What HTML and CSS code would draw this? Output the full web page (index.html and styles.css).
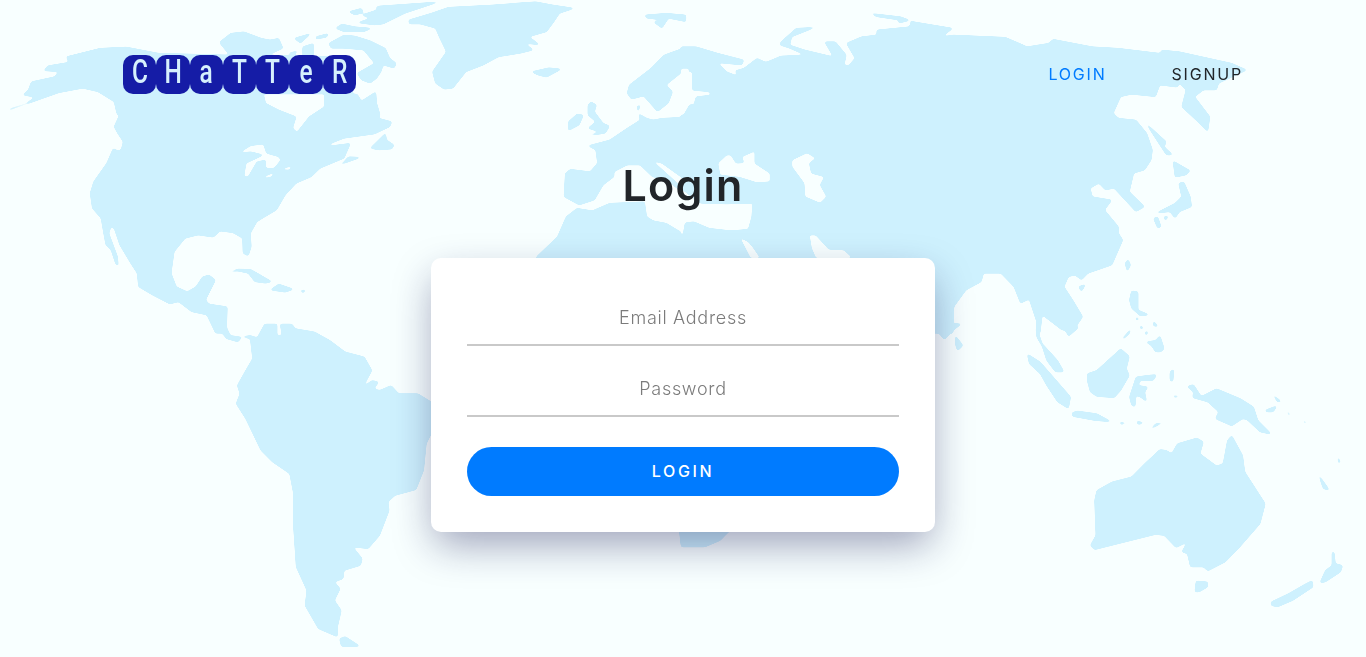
FILE: index.html
```html
<!DOCTYPE html>
<html lang="en">
<head>
<meta charset="utf-8">
<title>Chatter - Login</title>
<link rel="stylesheet" href="styles.css">
</head>
<body>
<svg class="world" viewBox="0 0 1366 657" width="1366" height="657" aria-hidden="true">
  <defs>
    <filter id="smooth" x="0" y="0" width="100%" height="100%" color-interpolation-filters="sRGB">
      <feGaussianBlur stdDeviation="1.2"/>
      <feColorMatrix type="matrix" values="0 0 0 0 .808  0 0 0 0 .945  0 0 0 0 .996  0 0 0 7 -2.1"/>
    </filter>
    <mask id="seas" maskUnits="userSpaceOnUse" x="0" y="0" width="1366" height="657">
      <rect width="1366" height="657" fill="#fff"/>
      <g fill="#000" transform="scale(.4355 .3333)">
        <polygon points="605,282 745,282 745,320 710,350 682,397 672,385 680,350 640,330 610,310"/>
        <polygon points="548,460 575,437 605,432 612,460 640,470 645,480 630,505 610,505 610,480 590,485 570,530 560,530 565,490 605,465 575,455"/>
        <polygon points="650,505 672,497 665,510 650,510"/>
        <polygon points="605,530 630,517 625,530 610,535"/>
        <polygon points="250,410 262,408 272,425 265,433"/>
        <polygon points="1568,215 1530,255 1545,275 1535,310 1510,335 1500,345 1570,345 1590,300 1590,215"/>
        <polygon points="1498,482 1520,490 1568,535 1568,565 1530,520"/>
      </g>
      <g fill="#000" transform="translate(683 0) scale(.4355 .3333)">
        <polygon points="-5,205 15,205 5,250 15,270 60,275 65,285 30,290 25,315 10,312 0,345 -5,345"/>
        <polygon points="0,570 20,590 40,610 100,612 160,610 158,650 150,688 110,692 60,685 25,665 5,668 0,705 -5,705 -5,570"/>
        <polygon points="110,465 122,490 140,488 135,470 165,453 165,490 200,520 200,545 170,548 130,532 85,525 80,490 100,465"/>
        <polygon points="250,480 285,458 305,475 290,490 295,520 325,530 315,555 330,590 315,610 280,590 278,550 250,500"/>
        <polygon points="130,712 150,725 160,740 178,775 155,775"/>
        <polygon points="290,705 305,705 335,748 370,750 390,775 305,775 295,745"/>
      </g>
    </mask>
  </defs>
  <g filter="url(#smooth)">
    <g mask="url(#seas)">
      <g transform="scale(.4355 .3333)">
        <polygon points="15,334 25,325 60,310 80,292 52,285 65,270 72,245 125,230 135,215 100,212 110,197 158,187 152,170 230,145 290,141 365,160 530,165 600,165 810,170 810,282 820,282 830,303 863,275 865,310 873,345 870,355 900,365 895,380 860,402 790,415 755,433 760,437 805,430 795,460 790,475 735,505 715,530 680,550 655,585 635,630 590,665 575,700 577,740 570,768 558,760 557,715 535,698 505,693 490,712 455,705 425,715 400,755 393,820 405,860 430,875 450,860 465,830 480,825 495,840 472,900 480,912 522,920 520,1000 495,1000 475,945 440,935 410,905 390,912 350,885 318,860 315,820 300,790 275,735 262,685 255,680 250,700 270,770 272,800 265,790 255,750 243,735 238,700 232,655 212,625 207,580 215,545 245,490 260,445 270,452 278,450 283,425 270,400 262,380 273,348 268,340 262,305 225,275 190,265 135,278"/>
        <polygon points="505,125 530,100 560,95 600,115 620,120 640,115 650,145 625,160 590,170 530,170 505,130"/>
        <polygon points="755,130 790,105 815,108 850,122 885,145 895,175 910,190 905,205 880,195 875,215 865,235 850,250 830,240 820,220 860,190 835,150 790,145 760,145"/>
        <polygon points="770,85 785,72 815,80 855,85 835,95 790,95"/>
        <polygon points="800,35 830,25 835,38 815,45"/>
        <polygon points="870,18 1010,5 930,40 880,72 860,75 820,68 850,55 830,45 865,30 910,35 860,25"/>
        <polygon points="725,110 755,100 750,112 725,118"/>
        <polygon points="675,115 715,100 690,130"/>
        <polygon points="695,140 720,130 720,165 695,165"/>
        <polygon points="660,160 685,152 675,165"/>
        <polygon points="938,60 990,40 1030,22 1130,15 1230,5 1270,15 1320,25 1285,40 1272,65 1255,95 1215,110 1240,135 1205,130 1225,150 1195,160 1145,170 1110,195 1070,215 1040,265 1020,268 1000,250 993,215 1025,155 1010,115 1000,85 965,72 940,72"/>
        <polygon points="1220,215 1260,203 1290,207 1255,232 1235,225"/>
        <polygon points="850,445 885,400 888,420 905,435 900,447 870,450"/>
        <polygon points="775,497 830,472 800,470 790,485"/>
        <polygon points="522,820 545,807 575,808 625,845 610,850 585,845 570,820 545,813"/>
        <polygon points="620,870 640,852 675,868 655,877"/>
        <polygon points="690,870 703,870 695,880"/>
        <polygon points="1480,45 1530,40 1575,45 1575,65 1535,55 1520,85 1500,65 1525,60 1485,55"/>
        <polygon points="1350,315 1357,305 1370,315 1365,335 1385,370 1400,378 1390,400 1350,408 1375,395 1350,385 1368,365 1350,345"/>
        <polygon points="1305,365 1325,342 1340,345 1330,375 1305,392"/>
        <polygon points="1590,145 1568,145 1525,165 1495,205 1445,255 1440,280 1450,298 1478,288 1510,335 1535,310 1545,275 1530,255 1568,215 1590,215"/>
        <polygon points="1590,350 1520,355 1500,360 1485,355 1465,340 1470,315 1475,310 1462,320 1470,360 1440,385 1400,420 1350,437 1368,450 1372,490 1355,515 1310,508 1298,520 1295,590 1330,615 1365,600 1385,555 1410,530 1410,515 1440,495 1470,495 1498,530 1530,540 1590,600"/>
        <polygon points="1232,770 1280,710 1300,650 1325,625 1360,632 1400,610 1480,605 1485,650 1500,662 1530,670 1568,700 1590,700 1590,1000 1232,1000"/>
      </g>
      <g transform="translate(683 0) scale(.4355 .3333)">
        <polygon points="-5,140 30,140 80,160 140,180 135,195 80,188 100,215 125,228 120,212 140,205 170,175 190,187 225,168 280,165 245,145 222,135 225,125 260,85 305,82 250,110 245,135 280,150 345,170 325,125 350,125 375,165 370,195 380,197 395,175 375,130 410,110 445,105 445,90 520,80 525,60 495,70 495,60 445,50 430,40 500,50 530,65 620,85 595,110 620,105 740,112 790,140 840,130 850,118 940,140 1000,145 1095,160 1100,150 1140,155 1260,190 1295,210 1230,250 1225,270 1195,270 1175,290 1210,350 1205,395 1190,375 1145,320 1155,270 1140,250 1135,262 1095,255 1085,290 1030,283 1005,290 988,340 1000,355 1040,360 1065,400 1078,450 1075,480 1060,510 1035,520 1025,575 1060,620 1040,635 990,565 970,570 955,550 935,565 940,590 985,600 968,630 1000,680 1000,700 1010,720 985,795 930,820 915,840 900,825 885,830 875,860 895,900 918,950 900,985 870,990 850,970 825,945 820,1000 812,1000 812,965 795,898 775,910 760,860 730,820 690,820 685,845 650,870 622,920 620,1000 500,1000 -5,1000"/>
        <polygon points="1125,482 1165,512 1155,525 1130,532"/>
        <polygon points="1085,640 1130,610 1145,590 1138,550 1150,545 1165,590 1168,620 1140,635 1130,655 1118,635"/>
        <polygon points="1062,368 1110,425 1105,440 1125,465 1110,465 1090,425"/>
        <polygon points="1080,655 1090,650 1098,680 1090,685"/>
        <polygon points="1103,650 1115,648 1108,662"/>
        <polygon points="1015,790 1022,778 1028,795 1020,815"/>
        <polygon points="908,860 925,852 915,875"/>
        <polygon points="1025,900 1030,872 1045,875 1045,930 1072,945 1050,948 1030,925"/>
        <polygon points="1040,950 1048,958 1040,962"/>
        <polygon points="1080,962 1092,980 1080,978"/>
        <polygon points="1050,975 1058,985 1050,988"/>
      </g>
      <g transform="translate(683 327) scale(.4355 .3333)">
        <polygon points="560,-10 640,-10 620,10 600,38 585,15"/>
        <polygon points="625,25 643,55 630,72 625,50"/>
        <polygon points="810,-5 825,50 860,100 875,135 855,135 835,100 825,60 812,30"/>
        <polygon points="865,0 880,15 885,28 910,0"/>
        <polygon points="790,80 820,105 860,165 890,210 885,245 860,225 835,175 820,140 795,110"/>
        <polygon points="892,258 905,252 950,260 985,285 945,280 895,268"/>
        <polygon points="1002,285 1020,288 1005,293"/>
        <polygon points="1040,282 1060,287 1045,293"/>
        <polygon points="1070,310 1085,290 1105,285 1085,298"/>
        <polygon points="928,140 950,130 1005,65 1025,88 1018,125 1025,145 1005,190 990,212 950,208 935,195 928,160"/>
        <polygon points="1040,150 1065,145 1088,142 1080,160 1050,160 1045,175 1068,180 1060,195 1065,225 1050,210 1040,205 1038,240 1030,235 1025,210 1035,170"/>
        <polygon points="1118,135 1127,125 1125,165 1118,160"/>
        <polygon points="1122,205 1142,207 1130,212"/>
        <polygon points="1008,35 1030,3 1025,20 1012,36"/>
        <polygon points="1060,15 1068,12 1064,28"/>
        <polygon points="1062,45 1085,40 1095,25 1105,65 1097,75 1085,75 1075,55"/>
        <polygon points="1157,178 1172,172 1190,208 1225,185 1280,215 1310,240 1320,280 1352,322 1325,315 1295,278 1285,275 1260,297 1222,275 1230,255 1205,225 1170,212 1172,195"/>
        <polygon points="1352,200 1375,225 1365,225"/>
        <polygon points="1335,250 1365,235 1355,255 1340,255"/>
        <polygon points="1385,245 1395,265 1390,265"/>
        <polygon points="1405,262 1412,272 1405,270"/>
        <polygon points="1425,278 1433,290 1425,288"/>
        <polygon points="1410,282 1415,295 1410,292"/>
        <polygon points="1432,300 1438,308 1432,306"/>
        <polygon points="1442,292 1446,310 1442,305"/>
        <polygon points="1447,315 1450,320 1446,320"/>
        <polygon points="1502,385 1510,405 1505,410"/>
        <polygon points="1458,440 1485,490 1470,485"/>
        <polygon points="945,520 950,490 985,465 1030,450 1060,410 1095,367 1110,370 1122,380 1135,350 1180,333 1195,345 1187,380 1225,417 1240,410 1250,340 1260,325 1285,385 1290,435 1337,530 1325,590 1275,665 1245,705 1205,732 1195,720 1165,720 1158,680 1145,675 1158,645 1132,662 1105,625 1085,622 1000,650 945,668 935,655 948,625"/>
        <polygon points="1178,762 1205,765 1205,780 1185,795 1175,795"/>
        <polygon points="1490,675 1495,675 1498,710 1515,715 1510,735 1475,765 1462,768 1475,730 1490,715"/>
        <polygon points="1445,760 1447,780 1400,820 1365,840 1350,835 1350,825 1390,800 1430,770"/>
      </g>
      <g transform="translate(150 327) scale(.3827 .3333)">
        <polygon points="170,-10 200,35 230,45 240,30 262,35 268,95 250,130 228,175 235,200 225,230 250,275 290,370 320,405 365,440 375,500 375,600 382,720 410,790 405,835 440,905 490,930 490,900 500,850 482,820 497,785 482,765 505,755 507,730 550,715 555,695 530,660 570,665 600,625 625,550 622,525 640,505 695,488 715,430 722,350 735,320 760,320 760,225 735,225 700,200 650,200 630,175 600,190 585,185 598,165 580,160 557,180 580,130 560,90 510,75 470,40 430,15 380,5 370,-10 340,-10 345,25 332,25 332,-10 300,-10 280,32 262,25 235,30 210,25 195,-10"/>
        <polygon points="495,935 510,928 550,958 500,958"/>
        <polygon points="1382,600 1388,660 1450,660 1490,640 1525,600"/>
      </g>
    </g>
  </g>
</svg>

<div class="page">
  <header class="topbar">
    <a class="logo" href="#" aria-label="Chatter">
      <span class="tile"><span class="glyph">C</span></span><span class="tile"><span class="glyph">H</span></span><span class="tile"><span class="glyph">a</span></span><span class="tile"><span class="glyph">T</span></span><span class="tile"><span class="glyph">T</span></span><span class="tile"><span class="glyph">e</span></span><span class="tile"><span class="glyph">R</span></span>
    </a>
    <nav class="nav">
      <a class="nav-link active" href="#">LOGIN</a>
      <a class="nav-link" href="#">SIGNUP</a>
    </nav>
  </header>

  <main class="content">
    <h1 class="title">Login</h1>
    <form class="card">
      <input class="field" type="email" placeholder="Email Address">
      <input class="field" type="password" placeholder="Password">
      <button class="submit" type="button">LOGIN</button>
    </form>
  </main>
</div>
</body>
</html>
```
FILE: styles.css
```css
* { box-sizing: border-box; }

html, body {
  margin: 0;
  height: 100%;
}

body {
  background: #f8ffff;
  font-family: Inter, "Open Sans", "Liberation Sans", sans-serif;
  color: #212529;
  overflow: hidden;
  position: relative;
}

.world {
  position: absolute;
  top: 0;
  left: 0;
  display: block;
}

.page {
  position: relative;
}

.topbar {
  display: flex;
  justify-content: space-between;
  align-items: center;
  padding: 55px 123px 0 123px;
}

.logo {
  display: flex;
  text-decoration: none;
}

.tile {
  width: 33.3px;
  height: 39px;
  padding-bottom: 7px;
  display: flex;
  align-items: center;
  justify-content: center;
  background: #151ca6;
  border-radius: 10px;
  color: #d6f0fd;
}

.glyph {
  display: block;
  font-family: Roboto, "Liberation Sans", sans-serif;
  font-size: 34px;
  font-weight: 500;
  line-height: 30px;
  transform: scaleX(.72);
}

.nav {
  display: flex;
  gap: 65px;
  margin-bottom: 1px;
}

.nav-link {
  color: #212529;
  text-decoration: none;
  font-size: 16px;
  font-weight: 400;
  letter-spacing: 1.8px;
}

.nav-link.active {
  color: #007bff;
}

.content {
  display: flex;
  flex-direction: column;
  align-items: center;
}

.title {
  margin: 67px 0 49px;
  font-size: 43px;
  line-height: 48px;
  font-weight: 600;
  letter-spacing: 1.2px;
  color: #212529;
}

.card {
  width: 504px;
  height: 274px;
  padding: 36px;
  display: flex;
  flex-direction: column;
  gap: 19px;
  background: #fff;
  border-radius: 10px;
  box-shadow: 0 16px 40px -4px rgba(20, 20, 80, .4);
}

.field {
  display: block;
  width: 100%;
  height: 52px;
  padding: 0 0 4px;
  border: 0;
  border-bottom: 2px solid #c9c9c9;
  background: transparent;
  font: 300 18px Inter, "Open Sans", sans-serif;
  letter-spacing: .7px;
  text-align: center;
  outline: none;
}

.field::placeholder {
  color: #7b7b7b;
  opacity: 1;
}

.submit {
  margin-top: 11px;
  height: 49px;
  padding: 0 0 2px;
  border: 0;
  border-radius: 25px;
  background: #007bff;
  color: #fff;
  font: 500 16px Inter, "Open Sans", sans-serif;
  letter-spacing: 2.6px;
}
```
